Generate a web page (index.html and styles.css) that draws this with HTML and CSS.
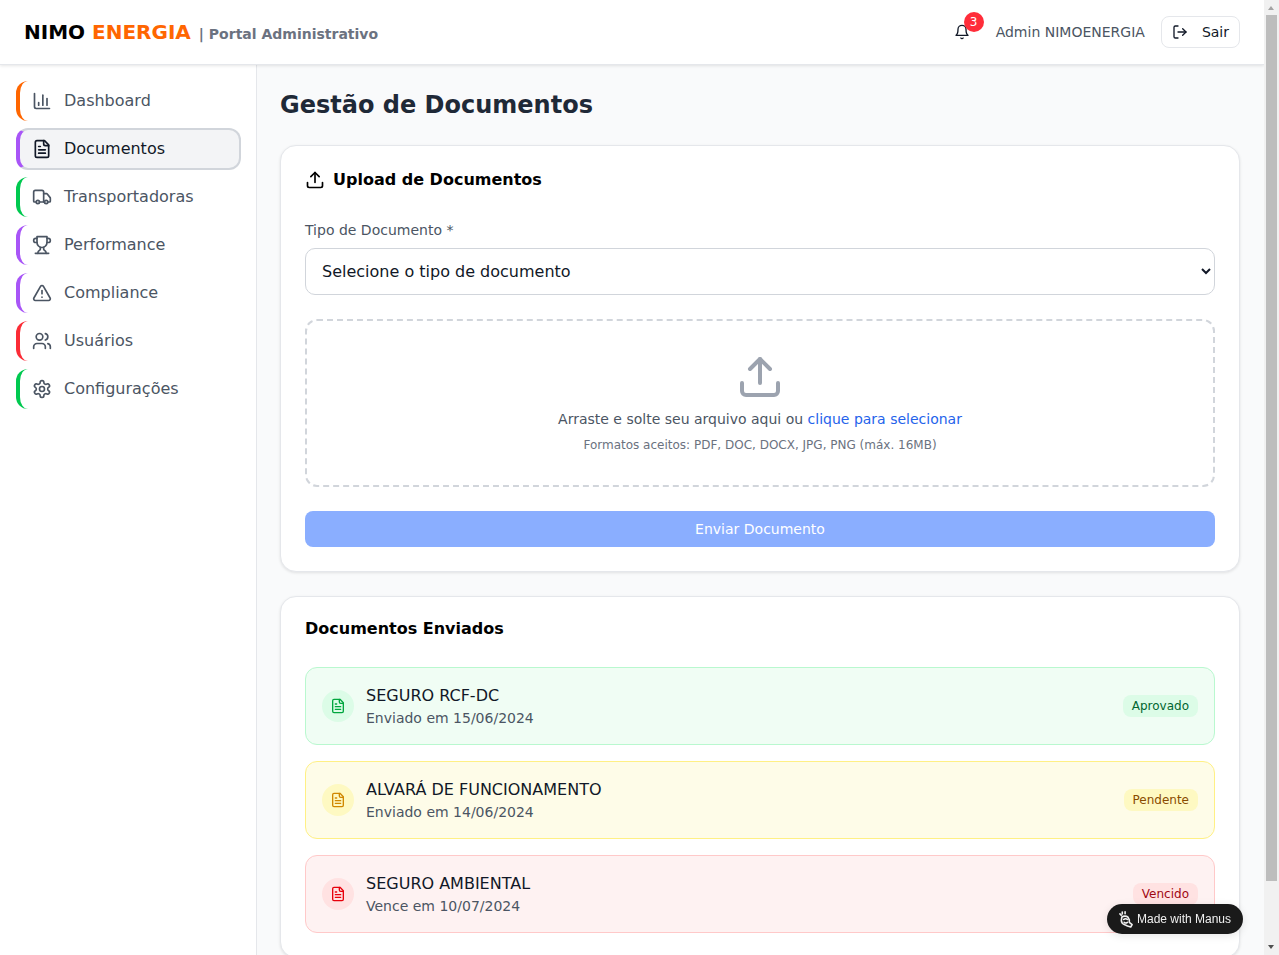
FILE: index.html
```html
<!DOCTYPE html>
<html lang="pt-BR">
	<head>
		<meta charset="utf-8">
		<title>NIMO ENERGIA | Portal Administrativo</title>
		<link rel="stylesheet" href="styles.css">
	</head>
	<body>
		<svg class="sprite" width="0" height="0">
			<symbol id="i-chart" viewBox="0 0 24 24"><path d="M3 3v16a2 2 0 0 0 2 2h16"/><path d="M18 17V9"/><path d="M13 17V5"/><path d="M8 17v-3"/></symbol>
			<symbol id="i-file" viewBox="0 0 24 24"><path d="M15 2H6a2 2 0 0 0-2 2v16a2 2 0 0 0 2 2h12a2 2 0 0 0 2-2V7Z"/><path d="M14 2v4a2 2 0 0 0 2 2h4"/><path d="M10 9H8"/><path d="M16 13H8"/><path d="M16 17H8"/></symbol>
			<symbol id="i-truck" viewBox="0 0 24 24"><path d="M14 18V6a2 2 0 0 0-2-2H4a2 2 0 0 0-2 2v11a1 1 0 0 0 1 1h2"/><path d="M15 18H9"/><path d="M19 18h2a1 1 0 0 0 1-1v-3.65a1 1 0 0 0-.22-.624l-3.48-4.35A1 1 0 0 0 17.52 8H14"/><circle cx="17" cy="18" r="2"/><circle cx="7" cy="18" r="2"/></symbol>
			<symbol id="i-trophy" viewBox="0 0 24 24"><path d="M6 9H4.5a2.5 2.5 0 0 1 0-5H6"/><path d="M18 9h1.5a2.5 2.5 0 0 0 0-5H18"/><path d="M4 22h16"/><path d="M10 14.66V17c0 .55-.47.98-.97 1.21C7.85 18.75 7 20.24 7 22"/><path d="M14 14.66V17c0 .55.47.98.97 1.21C16.15 18.75 17 20.24 17 22"/><path d="M18 2H6v7a6 6 0 0 0 12 0V2Z"/></symbol>
			<symbol id="i-alert" viewBox="0 0 24 24"><path d="m21.73 18-8-14a2 2 0 0 0-3.48 0l-8 14A2 2 0 0 0 4 21h16a2 2 0 0 0 1.73-3"/><path d="M12 9v4"/><path d="M12 17h.01"/></symbol>
			<symbol id="i-users" viewBox="0 0 24 24"><path d="M16 21v-2a4 4 0 0 0-4-4H6a4 4 0 0 0-4 4v2"/><circle cx="9" cy="7" r="4"/><path d="M22 21v-2a4 4 0 0 0-3-3.87"/><path d="M16 3.13a4 4 0 0 1 0 7.75"/></symbol>
			<symbol id="i-gear" viewBox="0 0 24 24"><path d="M12.22 2h-.44a2 2 0 0 0-2 2v.18a2 2 0 0 1-1 1.73l-.43.25a2 2 0 0 1-2 0l-.15-.08a2 2 0 0 0-2.73.73l-.22.38a2 2 0 0 0 .73 2.73l.15.1a2 2 0 0 1 1 1.72v.51a2 2 0 0 1-1 1.74l-.15.09a2 2 0 0 0-.73 2.73l.22.38a2 2 0 0 0 2.73.73l.15-.08a2 2 0 0 1 2 0l.43.25a2 2 0 0 1 1 1.73V20a2 2 0 0 0 2 2h.44a2 2 0 0 0 2-2v-.18a2 2 0 0 1 1-1.73l.43-.25a2 2 0 0 1 2 0l.15.08a2 2 0 0 0 2.73-.73l.22-.39a2 2 0 0 0-.73-2.73l-.15-.08a2 2 0 0 1-1-1.74v-.5a2 2 0 0 1 1-1.74l.15-.09a2 2 0 0 0 .73-2.73l-.22-.38a2 2 0 0 0-2.73-.73l-.15.08a2 2 0 0 1-2 0l-.43-.25a2 2 0 0 1-1-1.73V4a2 2 0 0 0-2-2z"/><circle cx="12" cy="12" r="3"/></symbol>
			<symbol id="i-upload" viewBox="0 0 24 24"><path d="M21 15v4a2 2 0 0 1-2 2H5a2 2 0 0 1-2-2v-4"/><polyline points="17 8 12 3 7 8"/><line x1="12" y1="3" x2="12" y2="15"/></symbol>
			<symbol id="i-bell" viewBox="0 0 24 24"><path d="M6 8a6 6 0 0 1 12 0c0 7 3 9 3 9H3s3-2 3-9"/><path d="M10.300 21a1.940 1.940 0 0 0 3.400 0"/></symbol>
			<symbol id="i-logout" viewBox="0 0 24 24"><path d="M9 21H5a2 2 0 0 1-2-2V5a2 2 0 0 1 2-2h4"/><polyline points="16 17 21 12 16 7"/><line x1="21" y1="12" x2="9" y2="12"/></symbol>
		</svg>

		<header class="topbar">
			<div class="brand">
				<span class="brand-name">NIMO <span class="brand-accent">ENERGIA</span></span>
				<span class="brand-sub">| Portal Administrativo</span>
			</div>
			<div class="topbar-right">
				<div class="bell">
					<svg class="icon icon-16"><use href="#i-bell"/></svg>
					<span class="bell-count">3</span>
				</div>
				<span class="user-name">Admin NIMOENERGIA</span>
				<a class="logout" href="#"><svg class="icon icon-16"><use href="#i-logout"/></svg>Sair</a>
			</div>
		</header>

		<div class="layout">
			<nav class="sidebar">
				<a class="nav-item nav-orange" href="#"><svg class="icon icon-20"><use href="#i-chart"/></svg>Dashboard</a>
				<a class="nav-item nav-purple active" href="#"><svg class="icon icon-20"><use href="#i-file"/></svg>Documentos</a>
				<a class="nav-item nav-green" href="#"><svg class="icon icon-20"><use href="#i-truck"/></svg>Transportadoras</a>
				<a class="nav-item nav-purple" href="#"><svg class="icon icon-20"><use href="#i-trophy"/></svg>Performance</a>
				<a class="nav-item nav-purple" href="#"><svg class="icon icon-20"><use href="#i-alert"/></svg>Compliance</a>
				<a class="nav-item nav-red" href="#"><svg class="icon icon-20"><use href="#i-users"/></svg>Usuários</a>
				<a class="nav-item nav-green" href="#"><svg class="icon icon-20"><use href="#i-gear"/></svg>Configurações</a>
			</nav>

			<main class="content">
				<h1 class="page-title">Gestão de Documentos</h1>

				<section class="card">
					<h2 class="card-title"><svg class="icon icon-20"><use href="#i-upload"/></svg>Upload de Documentos</h2>
					<label class="field-label" for="tipo">Tipo de Documento *</label>
					<select class="field-select" id="tipo">
						<option>Selecione o tipo de documento</option>
					</select>
					<div class="dropzone">
						<svg class="icon dropzone-icon"><use href="#i-upload"/></svg>
						<p class="dropzone-text">Arraste e solte seu arquivo aqui ou <a href="#">clique para selecionar</a></p>
						<p class="dropzone-hint">Formatos aceitos: PDF, DOC, DOCX, JPG, PNG (máx. 16MB)</p>
					</div>
					<button class="submit" type="button">Enviar Documento</button>
				</section>

				<section class="card">
					<h2 class="card-title card-title-plain">Documentos Enviados</h2>
					<div class="doc-list">
						<div class="doc doc-green">
							<span class="doc-icon"><svg class="icon icon-16"><use href="#i-file"/></svg></span>
							<div class="doc-info">
								<div class="doc-name">SEGURO RCF-DC</div>
								<div class="doc-date">Enviado em 15/06/2024</div>
							</div>
							<span class="doc-badge">Aprovado</span>
						</div>
						<div class="doc doc-yellow">
							<span class="doc-icon"><svg class="icon icon-16"><use href="#i-file"/></svg></span>
							<div class="doc-info">
								<div class="doc-name">ALVARÁ DE FUNCIONAMENTO</div>
								<div class="doc-date">Enviado em 14/06/2024</div>
							</div>
							<span class="doc-badge">Pendente</span>
						</div>
						<div class="doc doc-red">
							<span class="doc-icon"><svg class="icon icon-16"><use href="#i-file"/></svg></span>
							<div class="doc-info">
								<div class="doc-name">SEGURO AMBIENTAL</div>
								<div class="doc-date">Vence em 10/07/2024</div>
							</div>
							<span class="doc-badge">Vencido</span>
						</div>
					</div>
				</section>
			</main>
		</div>

		<a class="manus" href="#">
			<svg class="manus-icon" viewBox="0 0 16 18" fill="none" stroke="currentColor" stroke-width="1.700" stroke-linecap="round" stroke-linejoin="round">
				<path d="M3.500 1v2M6.500 .8v2M1 3l1.300 1.500"/>
				<path d="M3 6.500c1.500-1.500 5-1.500 6.500 0l1.500 3v2.500l3 2.500-1.500 2.500-3.500-1-3-1.500c-2-.8-3.500-2.500-3.500-4.500z"/>
				<path d="M5 9c1-1 3-1 4 0M5.500 12c1 .8 2.500.8 3.500 0"/>
			</svg>
			Made with Manus
		</a>

		<div class="scrollbar">
			<span class="scroll-up"></span>
			<span class="scroll-thumb"></span>
			<span class="scroll-down"></span>
		</div>
	</body>
</html>
```

FILE: styles.css
```css
* {margin:0; padding:0; box-sizing:border-box;}
body {font-family:"DejaVu Sans",sans-serif; color:#111827; background:#f9fafb; font-size:16px; line-height:24px; padding-right:15px;}
a {text-decoration:none; color:inherit;}
.sprite {position:absolute;}

.icon {fill:none; stroke:currentColor; stroke-width:2; stroke-linecap:round; stroke-linejoin:round; flex:none;}
.icon-16 {width:16px; height:16px;}
.icon-20 {width:20px; height:20px;}

/* top bar */
.topbar {height:65px; background:#fff; border-bottom:1px solid #e5e7eb; box-shadow:0 1px 3px rgba(0,0,0,0.1); display:flex; align-items:center; justify-content:space-between; padding:0 24px; position:relative; z-index:2;}
.brand {display:flex; align-items:baseline; gap:8px; margin-top:2px;}
.brand-name {font-size:20px; font-weight:700; color:#000;}
.brand-accent {color:#ff6600;}
.brand-sub {font-size:14px; font-weight:700; color:#6b7280;}
.topbar-right {display:flex; align-items:center; gap:16px;}
.bell {width:34px; height:32px; padding-right:2px; display:flex; align-items:center; justify-content:center; position:relative; color:#111827;}
.bell-count {position:absolute; top:-4px; right:-4px; width:20px; height:20px; border-radius:50%; background:#ff2d3a; color:#fff; font-size:12px; line-height:20px; text-align:center;}
.user-name {font-size:14px; color:#4b5563;}
.logout {height:32px; padding:0 10px; border:1px solid #e5e7eb; border-radius:8px; background:#fff; display:flex; align-items:center; gap:14px; font-size:14px; color:#111827;}

/* sidebar */
.layout {display:flex; align-items:stretch;}
.sidebar {width:257px; flex:none; background:#fff; border-right:1px solid #e5e7eb; padding:16px; display:flex; flex-direction:column; gap:8px;}
.nav-item {height:40px; border-left:4px solid; border-radius:12px; padding-left:12px; display:flex; align-items:center; gap:12px; color:#4b5563;}
.nav-orange {border-left-color:#ff6600;}
.nav-purple {border-left-color:#a855f7;}
.nav-green {border-left-color:#00c950;}
.nav-red {border-left-color:#fb2c36;}
.nav-item.active {height:42px; margin:-1px -1px -1px 0; border:2px solid #d1d5db; border-left:4px solid #a855f7; background:#f3f4f6; color:#111827;}

/* main */
.content {flex:1; min-width:0; padding:24px 24px 62px 23px;}
.page-title {font-size:24px; line-height:32px; font-weight:700; color:#1f2937; margin-bottom:24px;}
.card {background:#fff; border:1px solid #e5e7eb; border-radius:16px; box-shadow:0 1px 3px rgba(0,0,0,0.1); padding:24px; margin-bottom:24px;}
.card-title {font-size:16px; line-height:20px; font-weight:700; color:#000; display:flex; align-items:center; gap:8px; margin-bottom:30px;}
.card-title-plain {margin-bottom:28px; margin-top:-2px;}
.field-label {display:block; font-size:14px; line-height:20px; color:#4b5563; margin-bottom:8px;}
.field-select {display:block; width:100%; height:47px; padding:0 12px; border:1px solid #d1d5db; border-radius:10px; background:#fff; font:16px "DejaVu Sans",sans-serif; color:#111827;}
.dropzone {margin-top:24px; height:168px; border:2px dashed #d1d5db; border-radius:12px; display:flex; flex-direction:column; align-items:center; padding-top:32px;}
.dropzone-icon {width:48px; height:48px; color:#9ca3af;}
.dropzone-text {font-size:14px; line-height:20px; color:#4b5563; margin-top:8px;}
.dropzone-text a {color:#2563eb;}
.dropzone-hint {font-size:12px; line-height:16px; color:#6b7280; margin-top:8px;}
.submit {display:block; width:100%; height:36px; margin-top:24px; border:0; border-radius:8px; background:#8aaeff; color:#fff; font:14px "DejaVu Sans",sans-serif;}

/* sent documents */
.doc-list {display:flex; flex-direction:column; gap:16px;}
.doc {height:78px; border:1px solid; border-radius:12px; padding:0 16px; display:flex; align-items:center; gap:12px;}
.doc-icon {width:32px; height:32px; border-radius:50%; display:flex; align-items:center; justify-content:center;}
.doc-info {flex:1; min-width:0;}
.doc-name {font-size:16px; line-height:24px; color:#111827;}
.doc-date {font-size:14px; line-height:20px; color:#4b5563;}
.doc-badge {font-size:12px; line-height:16px; padding:3px 9px; border-radius:8px;}
.doc-green {background:#f0fdf4; border-color:#b9f8cf;}
.doc-green .doc-icon {background:#dcfce7; color:#00a63e;}
.doc-green .doc-badge {background:#dcfce7; color:#016630;}
.doc-yellow {background:#fefce8; border-color:#fff085;}
.doc-yellow .doc-icon {background:#fef9c2; color:#d08700;}
.doc-yellow .doc-badge {background:#fef9c2; color:#894b00;}
.doc-red {background:#fef2f2; border-color:#ffc9c9;}
.doc-red .doc-icon {background:#ffe2e2; color:#e7000b;}
.doc-red .doc-badge {background:#ffe2e2; color:#9f0712;}

/* floating badge */
.manus {position:fixed; right:36px; bottom:21px; width:136px; height:30px; border-radius:15px; background:#1a1a1a; color:#f0f0f0; font:12px/30px "Liberation Sans",sans-serif; display:flex; align-items:center; justify-content:center; gap:3px; box-shadow:0 2px 8px rgba(0,0,0,0.1); z-index:4;}
.manus-icon {width:15px; height:17px;}

/* window scrollbar, the browser here draws none */
.scrollbar {position:fixed; top:0; right:0; bottom:0; width:15px; background:#f1f1f1; z-index:5;}
.scroll-thumb {position:absolute; top:15px; left:2px; right:2px; height:866px; background:#bdbdbd;}
.scroll-up {position:absolute; top:6px; left:4px; border:3.500px solid transparent; border-top:0; border-bottom:4px solid #a3a3a3;}
.scroll-down {position:absolute; bottom:6px; left:4px; border:3.500px solid transparent; border-bottom:0; border-top:4px solid #505050;}
```
